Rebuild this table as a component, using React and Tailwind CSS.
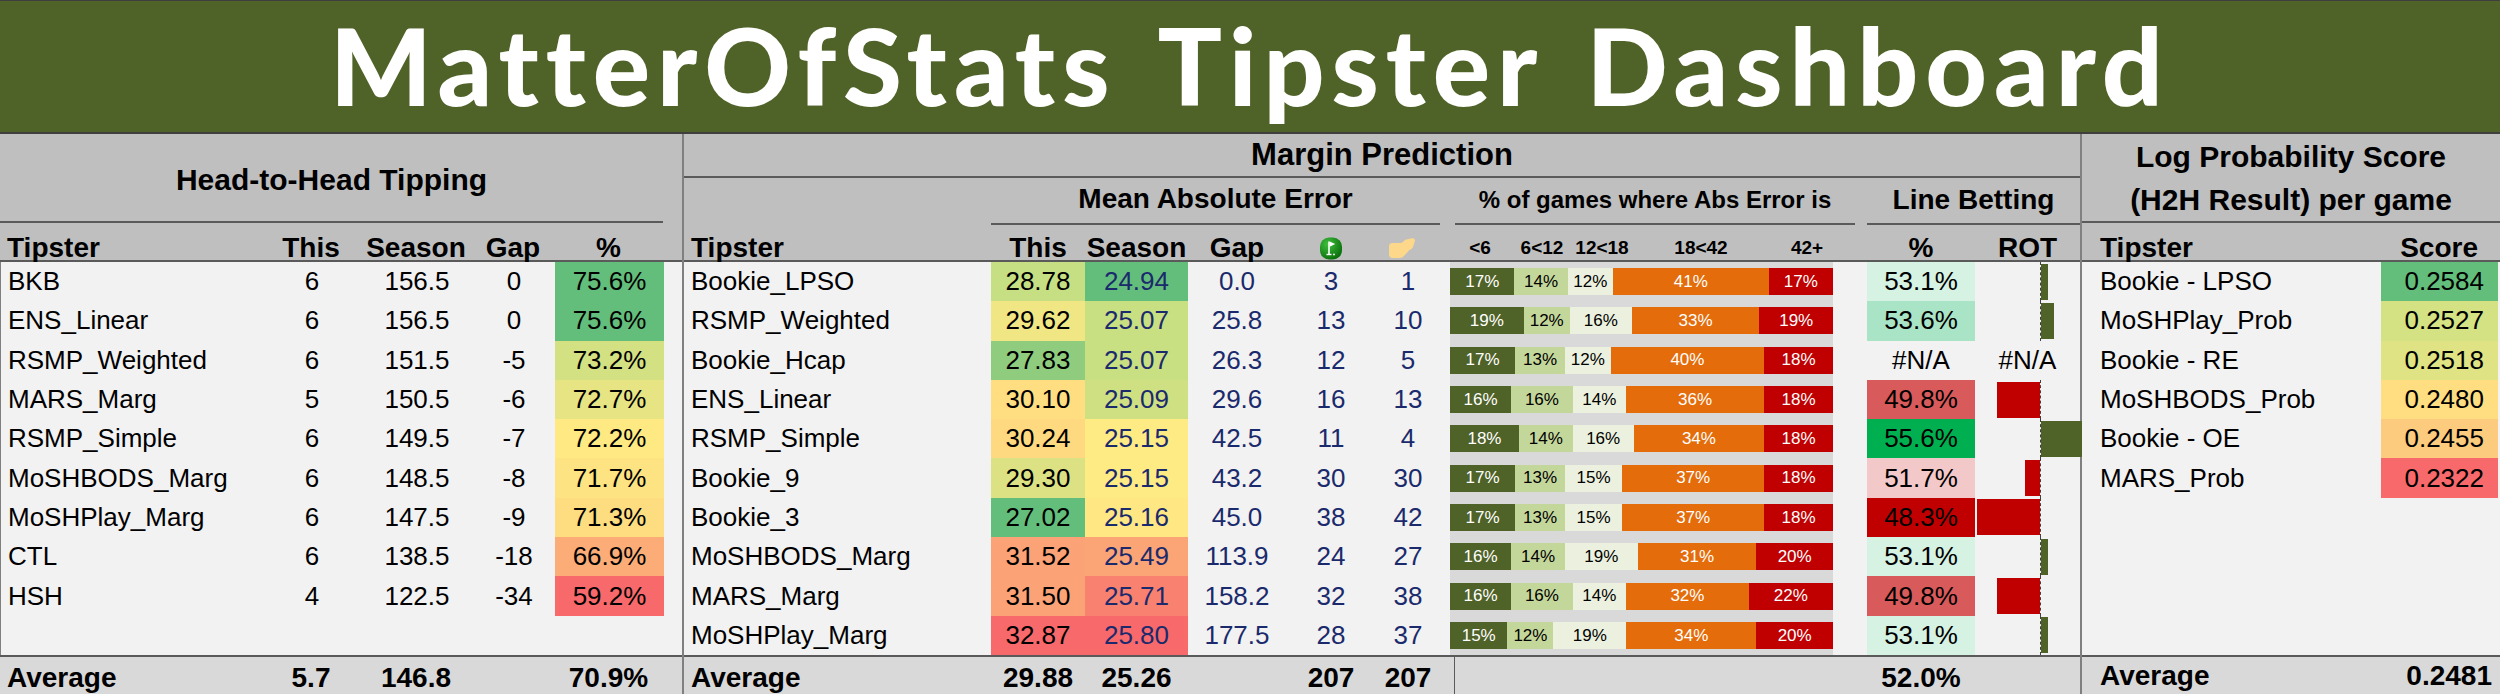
const H2H = [
  ['BKB', '6', '156.5', '0', '75.6%', 'bg-[#63be7b]'],
  ['ENS_Linear', '6', '156.5', '0', '75.6%', 'bg-[#63be7b]'],
  ['RSMP_Weighted', '6', '151.5', '-5', '73.2%', 'bg-[#d3e182]'],
  ['MARS_Marg', '5', '150.5', '-6', '72.7%', 'bg-[#e6e483]'],
  ['RSMP_Simple', '6', '149.5', '-7', '72.2%', 'bg-[#fee983]'],
  ['MoSHBODS_Marg', '6', '148.5', '-8', '71.7%', 'bg-[#fee382]'],
  ['MoSHPlay_Marg', '6', '147.5', '-9', '71.3%', 'bg-[#fedd81]'],
  ['CTL', '6', '138.5', '-18', '66.9%', 'bg-[#fbac77]'],
  ['HSH', '4', '122.5', '-34', '59.2%', 'bg-[#f8696b]'],
  null,
];

// name, this, bg, season, bg, gap, flag, hand, error buckets, line %, bg, ROT bar (px, sign = side)
const MARGIN = [
  ['Bookie_LPSO', '28.78', 'bg-[#c5df82]', '24.94', 'bg-[#63be7b]', '0.0', 3, 1, [17, 14, 12, 41, 17], '53.1%', 'bg-[#d5f2e3]', 7],
  ['RSMP_Weighted', '29.62', 'bg-[#f0e784]', '25.07', 'bg-[#c8df82]', '25.8', 13, 10, [19, 12, 16, 33, 19], '53.6%', 'bg-[#a9e4c6]', 13],
  ['Bookie_Hcap', '27.83', 'bg-[#8fcc7e]', '25.07', 'bg-[#c8df82]', '26.3', 12, 5, [17, 13, 12, 40, 18], '#N/A', '', null],
  ['ENS_Linear', '30.10', 'bg-[#ffdd81]', '25.09', 'bg-[#cfe082]', '29.6', 16, 13, [16, 16, 14, 36, 18], '49.8%', 'bg-[#d85a5b]', -43],
  ['RSMP_Simple', '30.24', 'bg-[#ffd980]', '25.15', 'bg-[#ffeb84]', '42.5', 11, 4, [18, 14, 16, 34, 18], '55.6%', 'bg-[#00b050]', 41],
  ['Bookie_9', '29.30', 'bg-[#dce283]', '25.15', 'bg-[#ffeb84]', '43.2', 30, 30, [17, 13, 15, 37, 18], '51.7%', 'bg-[#f3c8c8]', -15],
  ['Bookie_3', '27.02', 'bg-[#63be7b]', '25.16', 'bg-[#ffe883]', '45.0', 38, 42, [17, 13, 15, 37, 18], '48.3%', 'bg-[#c00000]', -63],
  ['MoSHBODS_Marg', '31.52', 'bg-[#fba276]', '25.49', 'bg-[#fba476]', '113.9', 24, 27, [16, 14, 19, 31, 20], '53.1%', 'bg-[#d5f2e3]', 7],
  ['MARS_Marg', '31.50', 'bg-[#fba377]', '25.71', 'bg-[#f8816f]', '158.2', 32, 38, [16, 16, 14, 32, 22], '49.8%', 'bg-[#d85a5b]', -43],
  ['MoSHPlay_Marg', '32.87', 'bg-[#f8696b]', '25.80', 'bg-[#f8696b]', '177.5', 28, 37, [15, 12, 19, 34, 20], '53.1%', 'bg-[#d5f2e3]', 7],
];

const LPS = [
  ['Bookie - LPSO', '0.2584', 'bg-[#63be7b]'],
  ['MoSHPlay_Prob', '0.2527', 'bg-[#d4e283]'],
  ['Bookie - RE', '0.2518', 'bg-[#dfe383]'],
  ['MoSHBODS_Prob', '0.2480', 'bg-[#ffdd81]'],
  ['Bookie - OE', '0.2455', 'bg-[#fdcb7d]'],
  ['MARS_Prob', '0.2322', 'bg-[#f8696b]'],
  null, null, null, null,
];

const SEG = [
  'bg-[#4f6228] text-white',
  'bg-[#c4d79b] text-black',
  'bg-[#ebf1de] text-black',
  'bg-[#e46c0a] text-white',
  'bg-[#c00000] text-white',
];

const LEFT_COLS = 'grid grid-cols-[262px_98px_112px_82px_109px_1fr]';
const MID_COLS = 'grid grid-cols-[307px_94px_103px_98px_90px_64px_415px_12px_108px_1fr]';
const RIGHT_COLS = 'grid grid-cols-[299px_117px_1fr]';

function Flag() {
  return (
    <svg width="24" height="23" viewBox="0 0 24 23">
      <defs>
        <radialGradient id="fg" cx="35%" cy="30%" r="75%">
          <stop offset="0" stopColor="#3fbf3f" />
          <stop offset="1" stopColor="#0a6e0a" />
        </radialGradient>
      </defs>
      <rect x="1" y="0.5" width="22" height="22" rx="9" fill="url(#fg)" />
      <path d="M10 4.5v12.5" stroke="#fff" strokeWidth="1.6" />
      <path d="M10.6 4.5l5.6 2.6-5.6 2.6z" fill="#fff" />
      <path d="M7.5 17.5h5" stroke="#fff" strokeWidth="1.4" />
      <circle cx="15" cy="17.5" r="0.9" fill="#fff" />
    </svg>
  );
}

function Hand() {
  return (
    <svg width="30" height="22" viewBox="0 0 30 22">
      <path
        d="M2 9c0-2 1.5-3 3.5-3H14c1.6 0 2.6-2 4.4-3.2L25 1.2c2-.4 3.4 1 2.8 3l-1.6 5.2c-.6 1.8-2 3-3.8 3.6l-6 6.6c-1 1-2.2 1.4-3.6 1.4H5.5C3.5 21 2 19.6 2 17.6z"
        fill="#fdd88a"
      />
    </svg>
  );
}

function HeadToHead() {
  return (
    <div className="flex w-[684px] flex-col border-r-2 border-[#808080]">
      <div className="h-[128px] border-b-2 border-[#5a5a5a] bg-[#bfbfbf]">
        <div className="flex h-[89px] w-[663px] items-center justify-center border-b-2 border-[#5a5a5a] pt-[4px] text-[30px] font-bold">
          Head-to-Head Tipping
        </div>
        <div className={`${LEFT_COLS} h-[37px] items-center pt-[4px] text-[28px] font-bold`}>
          <div className="pl-[7px]">Tipster</div>
          <div className="text-center">This</div>
          <div className="text-center">Season</div>
          <div className="text-center">Gap</div>
          <div className="text-center">%</div>
          <div />
        </div>
      </div>
      <div className="flex-1 border-l border-[#808080] bg-[#f2f2f2] text-[26px]">
        {H2H.map((r, i) => (
          <div key={i} className={`${LEFT_COLS} h-[39.3px]`}>
            {r && (
              <>
                <div className="flex items-center pl-[7px]">{r[0]}</div>
                <div className="flex items-center justify-center">{r[1]}</div>
                <div className="flex items-center justify-center">{r[2]}</div>
                <div className="flex items-center justify-center">{r[3]}</div>
                <div className={`flex items-center justify-center ${r[5]}`}>{r[4]}</div>
              </>
            )}
          </div>
        ))}
      </div>
      <div className={`${LEFT_COLS} h-[39px] items-center border-t-2 border-[#5a5a5a] bg-[#d9d9d9] text-[28px] font-bold`}>
        <div className="pl-[7px]">Average</div>
        <div className="text-center">5.7</div>
        <div className="text-center">146.8</div>
        <div />
        <div className="text-center">70.9%</div>
        <div />
      </div>
    </div>
  );
}

function ErrorBar({ values }) {
  const total = values.reduce((a, b) => a + b, 0);
  return (
    <div className="flex h-[27px] w-full">
      {values.map((v, i) => (
        <div
          key={i}
          className={`flex items-center justify-center text-[17px] ${SEG[i]}`}
          style={{ width: `${(v / total) * 100}%` }}
        >
          {v}%
        </div>
      ))}
    </div>
  );
}

function Rot({ v }) {
  if (v == null) {
    return <div className="flex items-center justify-center text-[26px]">#N/A</div>;
  }
  return (
    <div className="flex items-center">
      <div className="flex h-full w-[65px] items-center justify-end">
        {v < 0 && <div className="h-[36px] bg-[#c00000]" style={{ width: -v }} />}
      </div>
      <div className="flex h-full flex-1 items-center border-l border-dashed border-[#404040]">
        {v > 0 && <div className="h-[36px] bg-[#4f6228]" style={{ width: v }} />}
      </div>
    </div>
  );
}

function Margin() {
  return (
    <div className="flex w-[1398px] flex-col border-r-2 border-[#808080]">
      <div className="h-[128px] border-b-2 border-[#5a5a5a] bg-[#bfbfbf]">
        <div className="flex h-[44px] items-center justify-center border-b-2 border-[#5a5a5a] text-[31px] font-bold">
          Margin Prediction
        </div>
        <div className={`${MID_COLS} h-[45px]`}>
          <div />
          <div className="col-span-5 flex items-end justify-center border-b-2 border-[#5a5a5a] pb-[3px] text-[28px] font-bold">
            Mean Absolute Error
          </div>
          <div className="flex items-end pl-[15px]">
            <div className="flex w-[400px] justify-center border-b-2 border-[#5a5a5a] pb-[5px] text-[24px] font-bold">
              % of games where Abs Error is
            </div>
          </div>
          <div />
          <div className="col-span-2 flex items-end justify-center border-b-2 border-[#5a5a5a] pb-[2px] text-[28px] font-bold">
            Line Betting
          </div>
        </div>
        <div className={`${MID_COLS} h-[37px] items-center pt-[4px] text-[28px] font-bold`}>
          <div className="pl-[7px]">Tipster</div>
          <div className="text-center">This</div>
          <div className="text-center">Season</div>
          <div className="text-center">Gap</div>
          <div className="flex justify-center"><Flag /></div>
          <div className="flex justify-center pr-[12px]"><Hand /></div>
          <div className="flex pl-[10px] text-[19px]">
            <div className="w-[60px] text-center">&lt;6</div>
            <div className="w-[64px] text-center">6&lt;12</div>
            <div className="w-[56px] text-center">12&lt;18</div>
            <div className="w-[142px] text-center">18&lt;42</div>
            <div className="w-[70px] text-center">42+</div>
          </div>
          <div />
          <div className="text-center">%</div>
          <div className="text-center">ROT</div>
        </div>
      </div>
      <div className="flex-1 bg-[#f2f2f2] text-[26px]">
        {MARGIN.map((r) => (
          <div key={r[0]} className={`${MID_COLS} h-[39.3px]`}>
            <div className="flex items-center pl-[7px]">{r[0]}</div>
            <div className={`flex items-center justify-center ${r[2]}`}>{r[1]}</div>
            <div className={`flex items-center justify-center text-[#1a2a6c] ${r[4]}`}>{r[3]}</div>
            <div className="flex items-center justify-center text-[#1a2a6c]">{r[5]}</div>
            <div className="flex items-center justify-center text-[#1a2a6c]">{r[6]}</div>
            <div className="flex items-center justify-center text-[#1a2a6c]">{r[7]}</div>
            <div className="pl-[10px] pr-[22px]">
              <div className="flex h-full items-center bg-[#d9d9d9]">
                <ErrorBar values={r[8]} />
              </div>
            </div>
            <div />
            <div className={`flex items-center justify-center ${r[10]}`}>{r[9]}</div>
            <Rot v={r[11]} />
          </div>
        ))}
      </div>
      <div className={`${MID_COLS} h-[39px] items-center border-t-2 border-[#5a5a5a] bg-[#d9d9d9] text-[28px] font-bold`}>
        <div className="pl-[7px]">Average</div>
        <div className="text-center">29.88</div>
        <div className="text-center">25.26</div>
        <div />
        <div className="text-center">207</div>
        <div className="text-center">207</div>
        <div className="h-full pl-[14px]">
          <div className="h-full border-l border-[#5a5a5a]" />
        </div>
        <div />
        <div className="text-center">52.0%</div>
        <div />
      </div>
    </div>
  );
}

function LogProb() {
  return (
    <div className="flex flex-1 flex-col">
      <div className="h-[128px] border-b-2 border-[#5a5a5a] bg-[#bfbfbf]">
        <div className="flex h-[89px] flex-col items-center justify-center border-b-2 border-[#5a5a5a] text-[30px] font-bold leading-[43px]">
          <div>Log Probability Score</div>
          <div>(H2H Result) per game</div>
        </div>
        <div className={`${RIGHT_COLS} h-[37px] items-center pt-[4px] text-[28px] font-bold`}>
          <div className="pl-[18px]">Tipster</div>
          <div className="pr-[20px] text-right">Score</div>
          <div />
        </div>
      </div>
      <div className="flex-1 bg-[#f2f2f2] text-[26px]">
        {LPS.map((r, i) => (
          <div key={i} className={`${RIGHT_COLS} h-[39.3px]`}>
            {r && (
              <>
                <div className="flex items-center pl-[18px]">{r[0]}</div>
                <div className={`flex items-center justify-end pr-[14px] ${r[2]}`}>{r[1]}</div>
              </>
            )}
          </div>
        ))}
      </div>
      <div className="flex h-[39px] items-center justify-between border-t-2 border-[#5a5a5a] bg-[#d9d9d9] pl-[18px] pr-[8px] text-[28px] font-bold">
        <span>Average</span>
        <span>0.2481</span>
      </div>
    </div>
  );
}

export default function App() {
  return (
    <div className="h-[694px] w-[2500px] overflow-hidden bg-white font-['Liberation_Sans',Arial,sans-serif] text-black">
      <div className="flex h-[134px] items-start justify-center border-t border-b-2 border-[#3f3f3f] bg-[#4f6228]">
        <h1 className="font-['Lato',sans-serif] text-[107px] font-black leading-[1.2] tracking-[0.065em] [word-spacing:12px] text-white">
          MatterOfStats Tipster Dashboard
        </h1>
      </div>
      <div className="flex h-[560px]">
        <HeadToHead />
        <Margin />
        <LogProb />
      </div>
    </div>
  );
}
